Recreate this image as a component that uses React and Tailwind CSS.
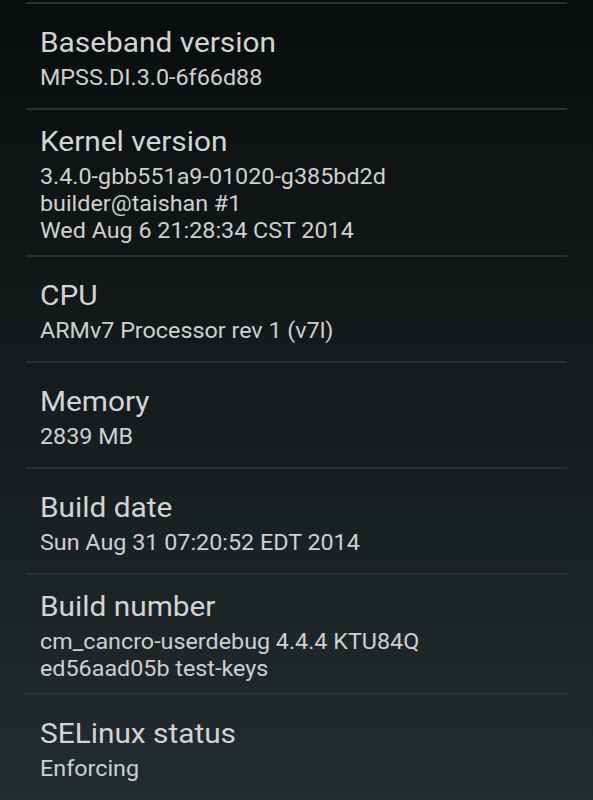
import React from "react";

const rows = [
  { title: "Baseband version", lines: ["MPSS.DI.3.0-6f66d88"] },
  {
    title: "Kernel version",
    lines: ["3.4.0-gbb551a9-01020-g385bd2d", "builder@taishan #1", "Wed Aug 6 21:28:34 CST 2014"],
  },
  { title: "CPU", lines: ["ARMv7 Processor rev 1 (v7l)"] },
  { title: "Memory", lines: ["2839 MB"] },
  { title: "Build date", lines: ["Sun Aug 31 07:20:52 EDT 2014"] },
  { title: "Build number", lines: ["cm_cancro-userdebug 4.4.4 KTU84Q", "ed56aad05b test-keys"] },
  { title: "SELinux status", lines: ["Enforcing"] },
];

function Divider() {
  return <div className="mx-[26px] h-[2px] bg-[#2b3032]" />;
}

function Row({ title, lines }) {
  return (
    <div className="flex min-h-[104px] flex-col justify-center px-[40px] pb-[11px] pt-[14px]">
      <div className="origin-left scale-x-[1.065] whitespace-nowrap text-[28px] leading-[36px] text-[#d4d4d4]">
        {title}
      </div>
      <div className="mt-[3px] origin-left scale-x-[1.06] whitespace-nowrap text-[22px] leading-[27px] text-[#d0d0d0]">
        {lines.map((l, i) => (
          <div key={i}>{l}</div>
        ))}
      </div>
    </div>
  );
}

export default function App() {
  return (
    <div
      className="h-[800px] w-[593px] overflow-hidden bg-gradient-to-b from-[#0a0d0d] to-[#232c2f]"
      style={{ fontFamily: "Roboto, 'Noto Sans', sans-serif" }}
    >
      <div className="h-[2px]" />
      {rows.map((r, i) => (
        <React.Fragment key={i}>
          <Divider />
          <Row {...r} />
        </React.Fragment>
      ))}
    </div>
  );
}
